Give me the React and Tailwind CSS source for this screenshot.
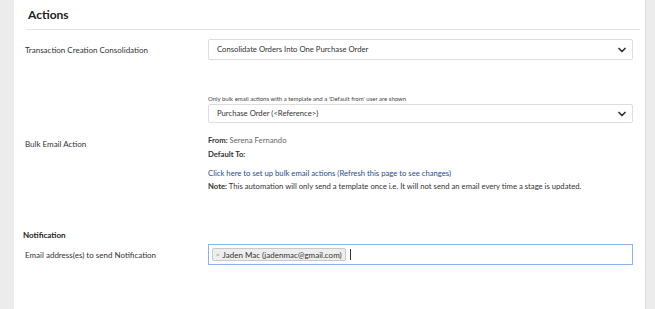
export default function App() {
  return (
    <div className="flex h-[309px] w-[655px] overflow-hidden bg-[#ececec] font-['Lato',sans-serif] text-[#333]">
      <div className="w-[14px] shrink-0 bg-[#ececec]" />
      <div className="flex-1 bg-white">
        {/* Header */}
        <div className="ml-[13px] mr-[5px] flex h-[30px] items-center border-b border-[#e3e3e3] pl-[1px]">
          <h2 className="text-[12px] font-bold text-[#222]">Actions</h2>
        </div>

        {/* Consolidation */}
        <div className="mt-[9px] flex items-center">
          <div className="w-[194px] pl-[11px] text-[8px]">Transaction Creation Consolidation</div>
          <div className="flex h-[21px] w-[425px] items-center justify-between rounded-[2px] border border-[#ddd] pl-[8px] pr-[6px] text-[7.7px] text-[#333]">
            <span>Consolidate Orders Into One Purchase Order</span>
            <Chevron />
          </div>
        </div>

        {/* Bulk email */}
        <div className="mt-[35px] flex items-center">
          <div className="w-[194px] pl-[11px] text-[8px]">Bulk Email Action</div>
          <div className="w-[425px]">
            <p className="text-[6px] leading-[8px] text-[#444]">Only bulk email actions with a template and a 'Default from' user are shown</p>
            <div className="mt-[1px] flex h-[19px] items-center justify-between rounded-[2px] border border-[#ddd] pl-[8px] pr-[6px] text-[7.7px]">
              <span>Purchase Order (&lt;Reference&gt;)</span>
              <Chevron />
            </div>
            <div className="mt-[10px] text-[7.7px] leading-[14px]">
              <p><span className="font-bold">From:</span> <span className="text-[#666]">Serena Fernando</span></p>
              <p className="font-bold">Default To:</p>
            </div>
            <div className="mt-[6px] text-[7.7px] leading-[13px]">
              <p className="text-[#1f4e8c]">Click here to set up bulk email actions (Refresh this page to see changes)</p>
              <p><span className="font-bold">Note:</span> This automation will only send a template once i.e. It will not send an email every time a stage is updated.</p>
            </div>
          </div>
        </div>

        {/* Notification */}
        <h3 className="ml-[9px] mt-[36px] text-[8px] font-bold text-[#222]">Notification</h3>
        <div className="mt-[3px] flex items-center">
          <div className="w-[194px] pl-[11px] text-[8px]">Email address(es) to send Notification</div>
          <div className="flex h-[21px] w-[425px] items-center gap-[4px] border border-[#8ab4f0] pl-[3px]">
            <span className="flex h-[13px] items-center gap-[3px] rounded-[2px] border border-[#c8c8c8] bg-[#eee] px-[3px] text-[8px] text-[#333]">
              <span className="text-[6px] text-[#888]">×</span>
              Jaden Mac (jadenmac@gmail.com)
            </span>
            <span className="h-[11px] w-px bg-[#333]" />
          </div>
        </div>
      </div>
      <div className="w-[10px] shrink-0 border-l border-[#dcdcdc] bg-[#ececec]" />
    </div>
  )
}

function Chevron() {
  return (
    <svg width="8" height="6" viewBox="0 0 8 6" fill="none">
      <path d="M1 1.5L4 4.5L7 1.5" stroke="#333" strokeWidth="1.7" strokeLinecap="round" strokeLinejoin="round" />
    </svg>
  )
}
